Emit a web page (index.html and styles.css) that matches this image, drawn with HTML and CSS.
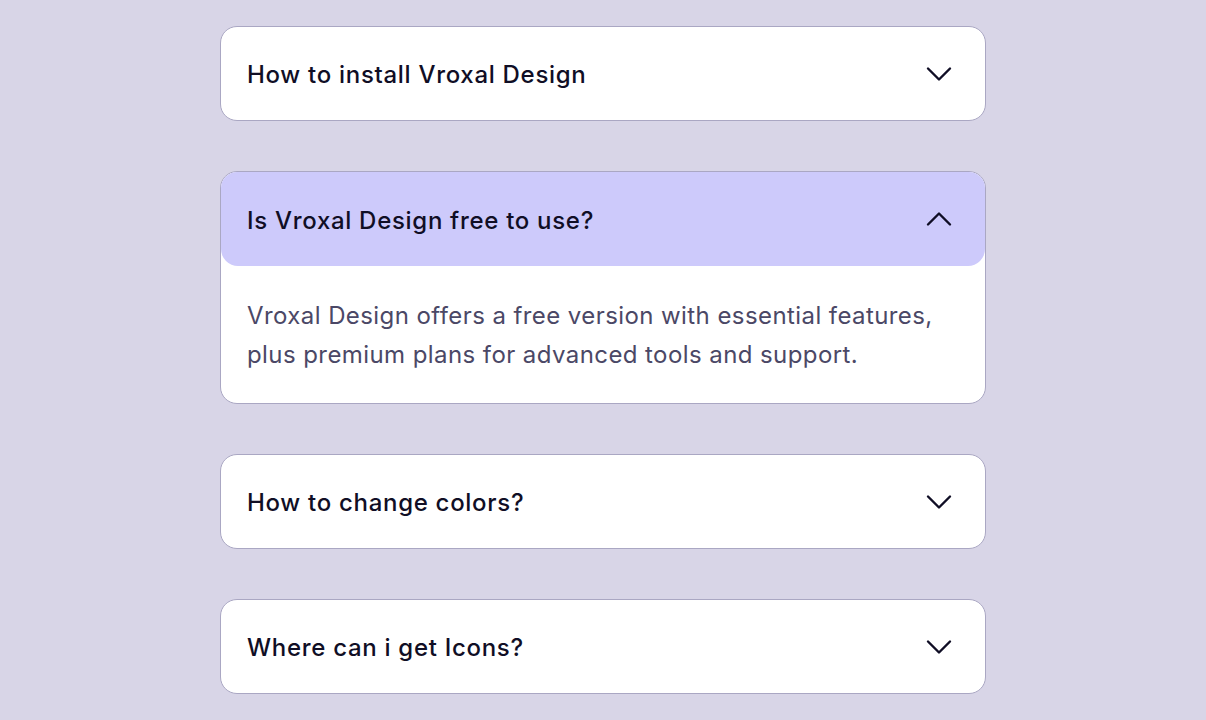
FILE: index.html
```html
<!DOCTYPE html>
<html>
<head>
  <title>FAQ</title>
  <link rel="stylesheet" href="styles.css">
</head>
<body>
  <div class="faq">

    <div class="faq-item">
      <div class="faq-head">
        <span class="faq-title">How to install Vroxal Design</span>
        <svg class="chev" viewBox="0 0 32 32"><path d="M5 10.5 L16 21.5 L27 10.5"/></svg>
      </div>
    </div>

    <div class="faq-item open">
      <div class="faq-head">
        <span class="faq-title">Is Vroxal Design free to use?</span>
        <svg class="chev" viewBox="0 0 32 32"><path d="M5 21.5 L16 10.5 L27 21.5"/></svg>
      </div>
      <div class="faq-body">
        Vroxal Design offers a free version with essential features,<br>
        plus premium plans for advanced tools and support.
      </div>
    </div>

    <div class="faq-item">
      <div class="faq-head">
        <span class="faq-title">How to change colors?</span>
        <svg class="chev" viewBox="0 0 32 32"><path d="M5 10.5 L16 21.5 L27 10.5"/></svg>
      </div>
    </div>

    <div class="faq-item">
      <div class="faq-head">
        <span class="faq-title">Where can i get Icons?</span>
        <svg class="chev" viewBox="0 0 32 32"><path d="M5 10.5 L16 21.5 L27 10.5"/></svg>
      </div>
    </div>

  </div>
</body>
</html>
```

FILE: styles.css
```css
body {
  margin: 0;
  background-color: #d8d5e7;
  font-family: Inter, "Noto Sans", sans-serif;
}

.faq {
  width: 766px;
  margin: 0 auto;
  padding-top: 26px;
  display: flex;
  flex-direction: column;
  gap: 50px;
}

.faq-item {
  background-color: #fff;
  border: 1px solid #aaa7c3;
  border-radius: 17px;
  overflow: hidden;
}

.faq-head {
  height: 93px;
  padding: 0 30px 0 26px;
  display: flex;
  align-items: center;
  justify-content: space-between;
}

.open .faq-head {
  height: 94px;
  background-color: #cdcafb;
  border-radius: 0 0 17px 17px;
}

.faq-title {
  padding-top: 2px;
  font-size: 24px;
  font-weight: 500;
  letter-spacing: 0.7px;
  color: #100e25;
}

.chev {
  width: 32px;
  height: 32px;
  fill: none;
  stroke: #100e25;
  stroke-width: 2.4;
  stroke-linecap: round;
  stroke-linejoin: round;
}

.faq-body {
  padding: 30px 26px 29px;
  font-size: 24px;
  line-height: 39px;
  letter-spacing: 0.42px;
  color: #4b4866;
}
```
